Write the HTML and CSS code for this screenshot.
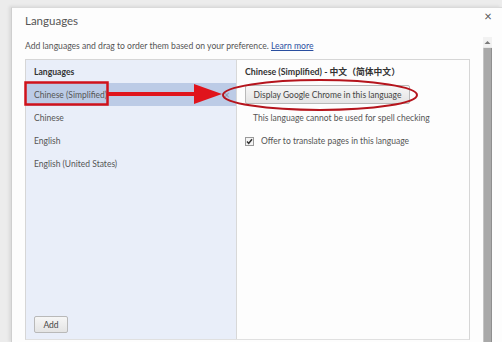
FILE: index.html
```html
<!DOCTYPE html>
<html>
<head>
  <meta charset="utf-8">
  <link rel="stylesheet" href="styles.css">
</head>
<body>
  <div class="backdrop">
    <div class="dialog">
      <div class="main">
        <div class="title">Languages</div>
        <div class="desc">Add languages and drag to order them based on your preference. <a href="#">Learn more</a></div>

        <div class="panel">
          <div class="side">
            <div class="side-head">Languages</div>
            <div class="lang-list">
              <div class="lang selected">
                <span>Chinese (Simplified)</span>
                <span class="remove">×</span>
              </div>
              <div class="lang">Chinese</div>
              <div class="lang">English</div>
              <div class="lang">English (United States)</div>
            </div>
            <div class="side-foot">
              <button class="btn add-btn">Add</button>
            </div>
          </div>

          <div class="detail">
            <div class="detail-head">Chinese (Simplified) - 中文（简体中文）</div>
            <button class="btn display-btn">Display Google Chrome in this language</button>
            <div class="note">This language cannot be used for spell checking</div>
            <label class="check-row">
              <svg class="check" width="9" height="9" viewBox="0 0 9 9">
                <rect x="0.5" y="0.5" width="8" height="8" fill="#f4f4f4" stroke="#9a9a9a"/>
                <path d="M2 4.6 L3.7 6.4 L7 2.2" fill="none" stroke="#333" stroke-width="1.5"/>
              </svg>
              <span>Offer to translate pages in this language</span>
            </label>
          </div>
        </div>
      </div>

      <div class="edge">
        <div class="close">×</div>
        <div class="scrollbar">
          <div class="scroll-up">
            <svg width="7" height="5" viewBox="0 0 7 5"><path d="M0.5 4 L3.5 1 L6.5 4 Z" fill="#7a7a7a"/></svg>
          </div>
          <div class="scroll-thumb"></div>
        </div>
      </div>
    </div>
  </div>

  <!-- red annotation marks drawn over the screenshot -->
  <svg class="marks" width="502" height="342" viewBox="0 0 502 342">
    <rect x="25.5" y="82.5" width="82" height="22" fill="none" stroke="#d0121b" stroke-width="2.5"/>
    <rect x="108" y="92" width="88" height="4" fill="#e0141c"/>
    <path d="M194 84 L222 94 L194 104 Z" fill="#e0141c"/>
    <ellipse cx="320" cy="95" rx="97" ry="15" fill="none" stroke="#b5141c" stroke-width="2"/>
  </svg>
</body>
</html>
```

FILE: styles.css
```css
body {
  margin: 0;
  width: 502px;
  height: 342px;
  overflow: hidden;
  background: #ececec;
  font-family: Lato, "Noto Sans CJK SC", sans-serif;
  color: #444;
}

.backdrop {
  padding: 7px 0 0 11px;
  height: 335px;
}

.dialog {
  display: flex;
  height: 100%;
  background: #fdfdfd;
  border-left: 1px solid #cfcfcf;
  border-top: 1px solid #dadada;
  box-shadow: -2px -1px 3px rgba(0,0,0,0.08);
}

.main {
  width: 450px;
  padding-left: 13px;
}

.title {
  margin-top: 6px;
  height: 14px;
  line-height: 14px;
  font-size: 11.5px;
  color: #555;
}

.desc {
  margin-top: 12px;
  height: 12px;
  line-height: 12px;
  font-size: 8.6px;
  color: #555;
}

.desc a {
  color: #2a4fa0;
  text-decoration: underline;
}

.panel {
  display: flex;
  margin-top: 7px;
  height: 279px;
  border: 1px solid #d6d6d6;
  border-bottom-color: #e0e0e0;
}

.side {
  width: 210px;
  display: flex;
  flex-direction: column;
  background: #e9eef9;
  border-right: 1px solid #d8d8d8;
}

.side-head {
  height: 23px;
  line-height: 24px;
  padding-left: 8px;
  font-size: 8.6px;
  font-weight: bold;
  color: #333;
}

.lang-list {
  flex: 1;
}

.lang {
  display: flex;
  justify-content: space-between;
  align-items: center;
  height: 23px;
  padding: 0 6px 0 8px;
  font-size: 8.5px;
  color: #555;
}

.lang.selected {
  background: #bccbe6;
}

.remove {
  font-size: 11px;
  color: #8a94a8;
}

.side-foot {
  padding: 0 0 6px 8px;
}

.btn {
  font-family: inherit;
  font-size: 8.5px;
  color: #444;
  background: linear-gradient(#f6f6f6, #e4e4e4);
  border: 1px solid #b9b9b9;
  border-radius: 2px;
  padding: 0;
}

.add-btn {
  width: 34px;
  height: 17px;
}

.detail {
  flex: 1;
  padding: 0 8px;
}

.detail-head {
  height: 24px;
  line-height: 24px;
  font-size: 8.8px;
  font-weight: bold;
  color: #333;
}

.display-btn {
  display: block;
  margin-top: 1px;
  width: 165px;
  height: 19px;
}

.note {
  margin-top: 7px;
  padding-left: 8px;
  height: 14px;
  line-height: 14px;
  font-size: 8.5px;
  color: #555;
}

.check-row {
  display: flex;
  align-items: center;
  gap: 7px;
  margin-top: 9px;
  height: 14px;
  font-size: 8.5px;
  color: #555;
}

.check {
  display: block;
}

.edge {
  margin-left: 12px;
  width: 20px;
  display: flex;
  flex-direction: column;
  align-items: flex-start;
}

.close {
  margin: 1px 0 0 2px;
  height: 14px;
  line-height: 14px;
  font-size: 13px;
  color: #555;
}

.scrollbar {
  margin-top: 14px;
  margin-left: 1px;
  flex: 1;
  width: 9px;
  display: flex;
  flex-direction: column;
  background: #e8e8e8;
}

.scroll-up {
  height: 10px;
  display: flex;
  align-items: center;
  justify-content: center;
  background: #f2f2f2;
}

.scroll-thumb {
  flex: 1;
  margin-top: 1px;
  background: #a9a9a9;
  border-left: 1px solid #c4c4c4;
  border-right: 1px solid #8f8f8f;
}

.marks {
  position: absolute;
  left: 0;
  top: 0;
  pointer-events: none;
}
```
